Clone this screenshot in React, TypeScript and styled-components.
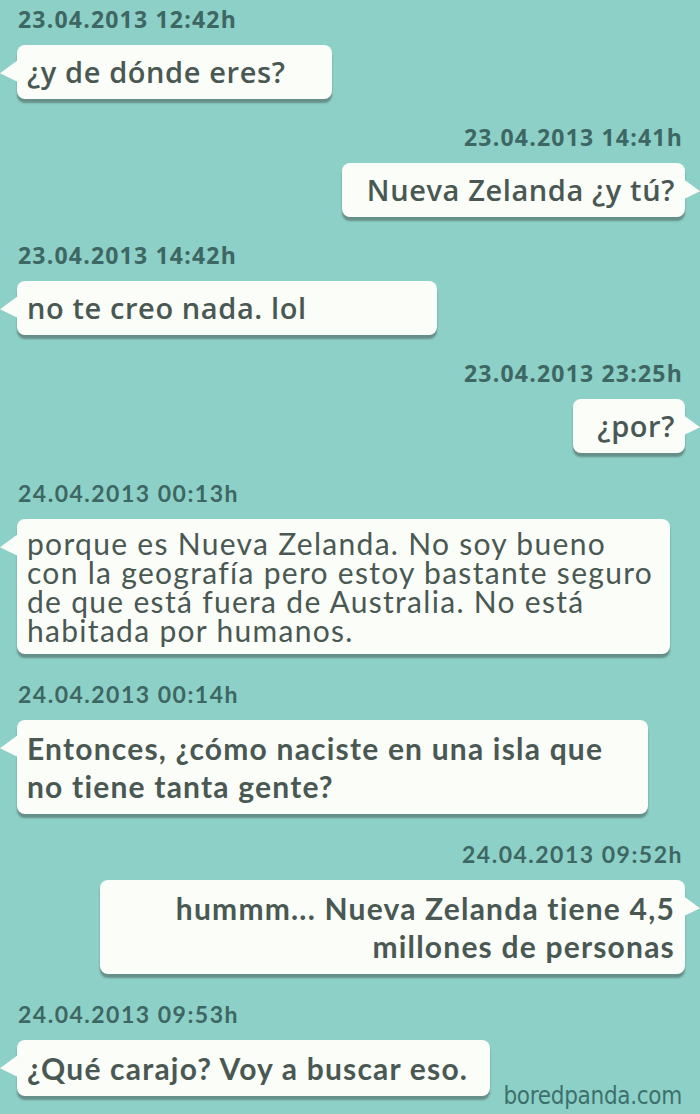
import React, { FC } from "react";
import styled, { createGlobalStyle, css } from "styled-components";

const GlobalStyle = createGlobalStyle`
  html, body {
    margin: 0;
    padding: 0;
    background: #8dd0c7;
  }
`;

type Side = "left" | "right";
type Face = "open" | "narrow" | "narrowBold";

interface Message {
  side: Side;
  stamp: string;
  stampFace: "open" | "narrow";
  lines: string[];
  width: number;
  face: Face;
}

const messages: Message[] = [
  { side: "left", stamp: "23.04.2013 12:42h", stampFace: "open", lines: ["¿y de dónde eres?"], width: 315, face: "open" },
  { side: "right", stamp: "23.04.2013 14:41h", stampFace: "open", lines: ["Nueva Zelanda ¿y tú?"], width: 343, face: "open" },
  { side: "left", stamp: "23.04.2013 14:42h", stampFace: "open", lines: ["no te creo nada. lol"], width: 420, face: "open" },
  { side: "right", stamp: "23.04.2013 23:25h", stampFace: "open", lines: ["¿por?"], width: 112, face: "open" },
  {
    side: "left",
    stamp: "24.04.2013 00:13h",
    stampFace: "narrow",
    lines: [
      "porque es Nueva Zelanda. No soy bueno",
      "con la geografía pero estoy bastante seguro",
      "de que está fuera de Australia. No está",
      "habitada por humanos.",
    ],
    width: 653,
    face: "narrow",
  },
  {
    side: "left",
    stamp: "24.04.2013 00:14h",
    stampFace: "narrow",
    lines: ["Entonces, ¿cómo naciste en una isla que", "no tiene tanta gente?"],
    width: 631,
    face: "narrowBold",
  },
  {
    side: "right",
    stamp: "24.04.2013 09:52h",
    stampFace: "narrow",
    lines: ["hummm... Nueva Zelanda tiene 4,5", "millones de personas"],
    width: 585,
    face: "narrowBold",
  },
  {
    side: "left",
    stamp: "24.04.2013 09:53h",
    stampFace: "narrow",
    lines: ["¿Qué carajo? Voy a buscar eso."],
    width: 473,
    face: "narrowBold",
  },
];

const Screen = styled.div`
  width: 700px;
  height: 1114px;
  box-sizing: border-box;
  padding: 6px 15px 0 17px;
  background: #8dd0c7;
  display: flex;
  flex-direction: column;
  gap: 25px;
  overflow: hidden;
`;

const Group = styled.div<{ $side: Side; $loose: boolean }>`
  display: flex;
  flex-direction: column;
  align-items: ${(p) => (p.$side === "left" ? "flex-start" : "flex-end")};
  gap: 13px;
  margin-top: ${(p) => (p.$loose ? 2 : 0)}px;
`;

const Stamp = styled.div<{ $face: "open" | "narrow" }>`
  color: #3e6663;
  font-weight: 700;
  line-height: 26px;
  padding: 0 2px 0 1px;
  ${(p) =>
    p.$face === "open"
      ? css`
          font-family: "Open Sans", sans-serif;
          font-size: 23px;
          letter-spacing: 1.2px;
        `
      : css`
          font-family: Lato, sans-serif;
          font-size: 23px;
          letter-spacing: 1.5px;
        `}
`;

const Bubble = styled.div<{ $side: Side; $width: number; $face: Face }>`
  position: relative;
  box-sizing: border-box;
  width: ${(p) => p.$width}px;
  max-width: 100%;
  background: #fafdf8;
  border-radius: 8px;
  box-shadow: 0 4px 2px rgba(70, 90, 85, 0.55);
  color: #4a5853;
  text-align: ${(p) => (p.$side === "left" ? "left" : "right")};
  padding: ${(p) => (p.$side === "left" ? "9px 10px 9px 10px" : "9px 10px 9px 16px")};

  ${(p) =>
    p.$face === "open" &&
    css`
      font-family: "Open Sans", sans-serif;
      font-weight: 600;
      font-size: 29px;
      letter-spacing: 0.6px;
      line-height: 36px;
    `}
  ${(p) =>
    p.$face === "narrow" &&
    css`
      font-family: Lato, sans-serif;
      font-weight: 400;
      font-size: 30px;
      letter-spacing: 1.3px;
      line-height: 29px;
      padding-top: 10px;
      padding-bottom: 9px;
    `}
  ${(p) =>
    p.$face === "narrowBold" &&
    css`
      font-family: Lato, sans-serif;
      font-weight: 700;
      font-size: 30px;
      letter-spacing: 1.2px;
      line-height: 38px;
    `}

  &::before {
    content: "";
    position: absolute;
    top: 15px;
    width: 18px;
    height: 22px;
    background: #fafdf8;
    ${(p) =>
      p.$side === "left"
        ? css`
            left: -17px;
            clip-path: polygon(100% 0, 0 60%, 100% 100%);
          `
        : css`
            right: -15px;
            clip-path: polygon(0 0, 100% 60%, 0 100%);
          `}
  }
`;

const Line = styled.div`
  white-space: nowrap;
`;

const Footer = styled.div`
  display: flex;
  justify-content: flex-end;
  margin-top: -39px;
  padding-right: 3px;
  font-family: "DejaVu Sans Condensed", "DejaVu Sans", sans-serif;
  font-size: 24px;
  letter-spacing: -0.3px;
  color: #3d706c;
`;

const App: FC = () => (
  <>
    <GlobalStyle />
    <Screen>
      {messages.map((m, i) => (
        <Group key={i} $side={m.side} $loose={m.face !== "open"}>
          <Stamp $face={m.stampFace}>{m.stamp}</Stamp>
          <Bubble $side={m.side} $width={m.width} $face={m.face}>
            {m.lines.map((l, j) => (
              <Line key={j}>{l}</Line>
            ))}
          </Bubble>
        </Group>
      ))}
      <Footer>boredpanda.com</Footer>
    </Screen>
  </>
);

export default App;
